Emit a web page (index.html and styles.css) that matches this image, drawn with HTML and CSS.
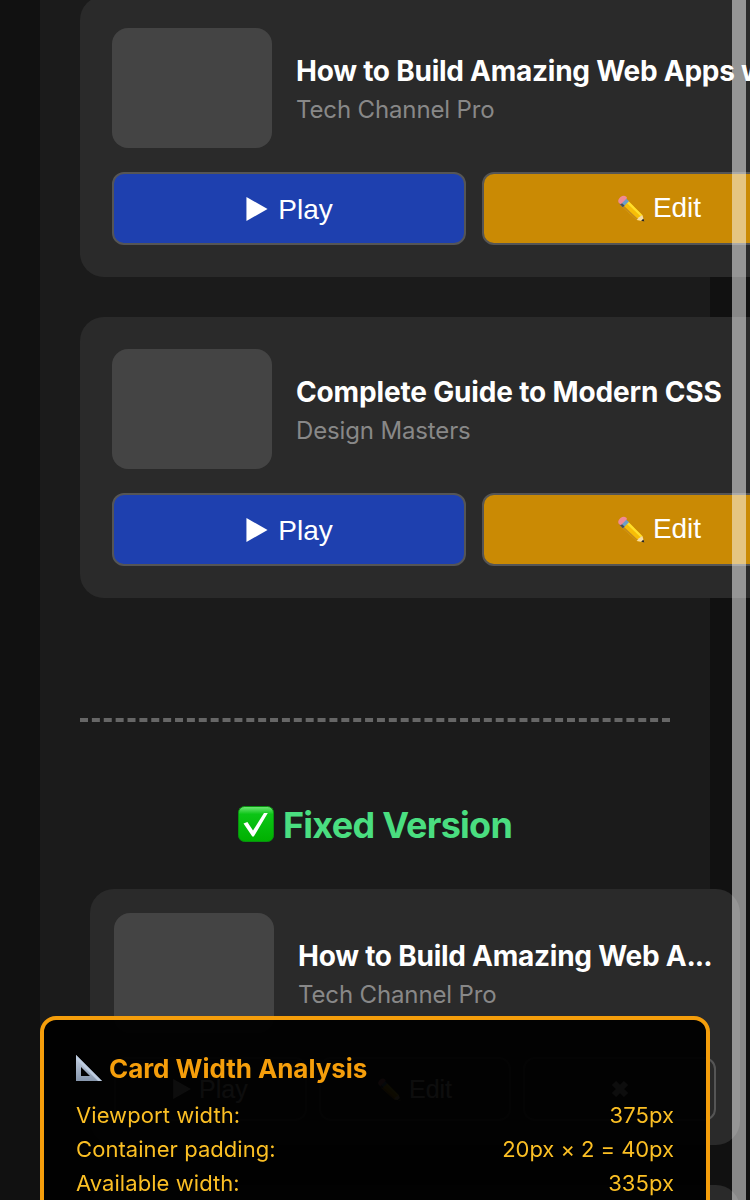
FILE: index.html
```html
<!DOCTYPE html>
<html lang="en">
<head>
<meta charset="utf-8">
<title>Card Width Analysis</title>
<link rel="stylesheet" href="styles.css">
</head>
<body>
<svg class="defs" aria-hidden="true">
  <defs>
    <linearGradient id="green" x1="0" y1="0" x2="0" y2="1"><stop offset="0" stop-color="#72e879"/><stop offset=".22" stop-color="#0cc516"/><stop offset="1" stop-color="#00b000"/></linearGradient>
    <linearGradient id="steel" x1="0" y1="0" x2="0" y2="1"><stop offset="0" stop-color="#c5d0e2"/><stop offset="1" stop-color="#8797ad"/></linearGradient>
    <symbol id="pencil" viewBox="0 0 28 28">
      <path d="M10.5 6 25.2 20.8 27.3 27.3 19.5 26 3.8 11.8z" fill="#f7bd08"/>
      <path d="M10.5 6 25.2 20.8 23.5 22 8.6 7.8z" fill="#ffdf2b"/>
      <path d="M3.8 11.8 19.5 26 20.8 24.8 5.2 10.3z" fill="#c58a18"/>
      <path d="M25.2 20.8 27.3 27.3 19.5 26 21.7 23.2z" fill="#f5dba5"/>
      <path d="M26.4 24.3 27.4 27.4 24 26.7z" fill="#292522"/>
      <path d="M8.2 3.4 11.4 6.6 5 12.6 1.6 9.2z" fill="#6d9dc7"/>
      <path d="M3.2 7.8 1.6 9.2 5 12.6 6.8 11z" fill="#4a4e58"/>
      <path d="M.9 8.2C-.5 6.4.4 3.8 2.6 2 4.6.4 7 .2 8.6 1.8L9.4 3 3 9.6z" fill="#f08a94"/>
    </symbol>
    <symbol id="play" viewBox="0 0 22 25"><path d="M0 0 22 12.5 0 25z" fill="#fff"/></symbol>
  </defs>
</svg>
<main class="container">
  <section class="cards">
    <article class="card">
      <div class="info"><div class="thumb"></div><div class="meta"><h3 class="title">How to Build Amazing Web Apps with React</h3><p class="channel">Tech Channel Pro</p></div></div>
      <div class="actions">
        <button class="btn play"><svg class="tri"><use href="#play"/></svg><span>Play</span></button>
        <button class="btn edit"><svg class="pen"><use href="#pencil"/></svg><span>Edit</span></button>
      </div>
    </article>
    <article class="card">
      <div class="info"><div class="thumb"></div><div class="meta"><h3 class="title guide">Complete Guide to Modern CSS</h3><p class="channel">Design Masters</p></div></div>
      <div class="actions">
        <button class="btn play"><svg class="tri"><use href="#play"/></svg><span>Play</span></button>
        <button class="btn edit"><svg class="pen"><use href="#pencil"/></svg><span>Edit</span></button>
      </div>
    </article>
  </section>
  <hr class="divider">
  <h2 class="heading">
    <svg class="check" viewBox="0 0 36 36"><rect x=".5" y=".5" width="35" height="35" rx="6" fill="url(#green)" stroke="#08920f"/><path d="M5.5 17.5 9.4 16 15 24.5 26 7h3.8L15.8 30.5h-1.5z" fill="#fff"/></svg>
    <span>Fixed Version</span>
  </h2>
  <article class="card fixed">
    <div class="info"><div class="thumb"></div><div class="meta"><h3 class="title">How to Build Amazing Web A<span class="dots">...</span></h3><p class="channel">Tech Channel Pro</p></div></div>
    <div class="actions">
      <button class="btn"><svg class="tri"><use href="#play"/></svg><span>Play</span></button>
      <button class="btn"><svg class="pen"><use href="#pencil"/></svg><span>Edit</span></button>
      <button class="btn"><svg class="cross" viewBox="0 0 18 18"><path d="M3 3 15 15M15 3 3 15" stroke="#fff" stroke-width="6"/></svg></button>
    </div>
  </article>
  <article class="card fixed"></article>
</main>
<aside class="panel">
  <h4 class="panel-title"><svg class="ruler" viewBox="0 0 26 26"><path fill="url(#steel)" fill-rule="evenodd" d="M0 0 26 26H0zM5 12v9h9z"/><path d="M0 0 26 26H22L0 4z" fill="#bdcce0"/></svg><span>Card Width Analysis</span></h4>
  <div class="row"><span>Viewport width:</span><span>375px</span></div>
  <div class="row"><span>Container padding:</span><span class="sum">20px × 2 = 40px</span></div>
  <div class="row"><span>Available width:</span><span>335px</span></div>
</aside>
<div class="scrollbar"></div>
</body>
</html>
```
FILE: styles.css
```css
* { box-sizing: border-box; }
html, body { margin: 0; height: 1200px; overflow: hidden; }
body { background: #111; color: #fff; font-family: Inter, "Liberation Sans", sans-serif; }
h2, h3, h4, p { margin: 0; }
.defs { position: absolute; width: 0; height: 0; }
.container { width: 670px; height: 1204px; margin: -4px 40px 0; padding: 0 40px; background: #1b1b1b; }
.cards { display: grid; gap: 40px; width: 1158px; }
.card { height: 281px; padding: 32px; border-radius: 24px; background: #2a2a2a; }
.info { display: flex; align-items: center; gap: 24px; margin-bottom: 24px; }
.thumb { flex: none; width: 160px; height: 120px; border-radius: 16px; background: #444; }
.meta { min-width: 0; padding-top: 4px; white-space: nowrap; }
.title { font-size: 28px; line-height: 36px; font-weight: 650; letter-spacing: -.25px; }
.title.guide { letter-spacing: -.16px; }
.channel { margin-top: 4px; font-size: 24px; line-height: 34px; letter-spacing: -.14px; color: #888; }
.actions { display: flex; gap: 16px; }
.btn { display: flex; align-items: center; justify-content: center; gap: 10px; width: 354px; height: 73px; padding: 0; border: 2px solid #555; border-radius: 12px; color: #fff; background: #2a2a2a; font: 28px "Liberation Sans", sans-serif; }
.btn.play { padding: 1px 0 0 1px; background: #1e40af; }
.btn.play span { padding-top: 1px; }
.btn.edit { gap: 8px; padding: 0 0 1px 1px; background: #ca8a04; }
.tri { width: 22px; height: 24px; }
.pen { width: 27px; height: 27px; }
.divider { margin: 120px 0 0; border: 0; border-top: 4px dashed #666; }
.heading { display: flex; justify-content: center; align-items: center; gap: 9px; height: 44px; margin: 80px 0 43px; color: #4ade80; font-size: 36px; font-weight: 700; letter-spacing: -.75px; }
.heading span { padding-top: 2px; }
.check { width: 36px; height: 36px; }
.fixed { width: 650px; height: 256px; margin: 0 0 40px 10px; padding: 24px; }
.dots { letter-spacing: -1px; }
.fixed .actions { gap: 12px; }
.fixed .btn { flex: 1; gap: 8px; height: 64px; font-size: 25px; }
.fixed .tri { width: 18px; height: 20px; }
.fixed .pen { width: 23px; height: 23px; }
.fixed .cross { width: 18px; height: 18px; }
.panel { position: fixed; left: 40px; top: 1016px; width: 670px; height: 300px; padding: 32px; border: 4px solid #f59e0b; border-radius: 16px; background: rgba(0, 0, 0, .95); color: #fbbf24; }
.panel-title { display: flex; align-items: center; gap: 7px; height: 32px; margin-bottom: 14px; color: #f59e0b; font-size: 26px; font-weight: 700; letter-spacing: -.06px; }
.ruler { width: 26px; height: 26px; }
.row { display: flex; justify-content: space-between; font-size: 22px; line-height: 34px; letter-spacing: .06px; }
.sum { letter-spacing: -.06px; }
.scrollbar { position: fixed; top: 0; left: 732px; width: 14px; height: 1200px; background: rgba(255, 255, 255, .5); }
```
